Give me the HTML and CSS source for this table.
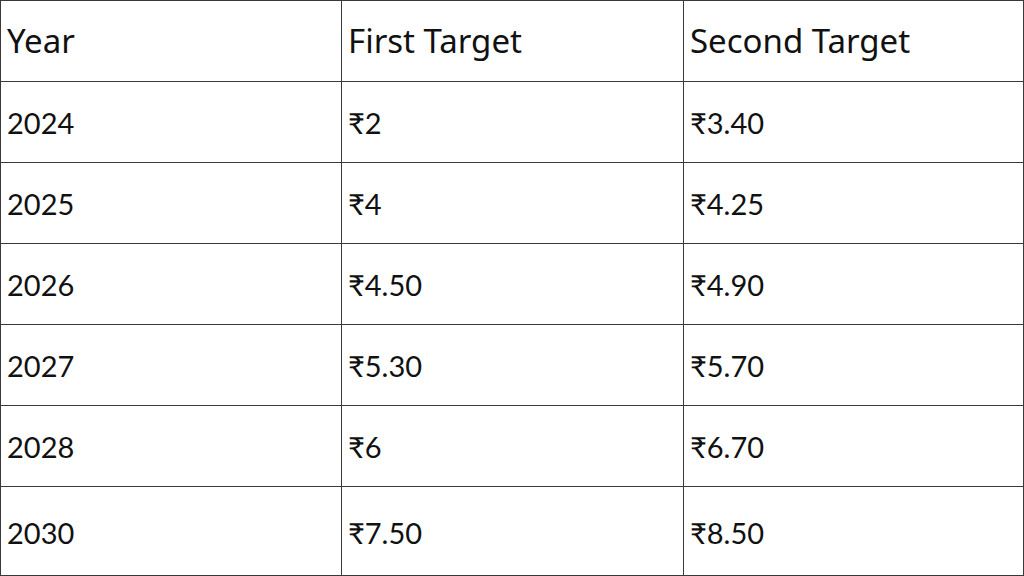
FILE: index.html
```html
<!DOCTYPE html>
<html>
<head>
<meta charset="utf-8">
<link rel="stylesheet" href="styles.css">
</head>
<body>
<table class="targets">
  <colgroup>
    <col class="col-a"><col class="col-b"><col class="col-c">
  </colgroup>
  <thead>
    <tr class="head-row">
      <th>Year</th><th>First Target</th><th>Second Target</th>
    </tr>
  </thead>
  <tbody>
    <tr><td>2024</td><td>₹2</td><td>₹3.40</td></tr>
    <tr><td>2025</td><td>₹4</td><td>₹4.25</td></tr>
    <tr><td>2026</td><td>₹4.50</td><td>₹4.90</td></tr>
    <tr><td>2027</td><td>₹5.30</td><td>₹5.70</td></tr>
    <tr><td>2028</td><td>₹6</td><td>₹6.70</td></tr>
    <tr class="last-row"><td>2030</td><td>₹7.50</td><td>₹8.50</td></tr>
  </tbody>
</table>
</body>
</html>
```
FILE: styles.css
```css
html, body {
  margin: 0;
  padding: 0;
  background: #ffffff;
}
.targets {
  border-collapse: collapse;
  width: 1023px;
  table-layout: fixed;
  color: #111111;
}
.col-a { width: 341px; }
.col-b { width: 342px; }
.col-c { width: 340px; }
.targets th,
.targets td {
  border: 1px solid #3a3a3a;
  text-align: left;
  vertical-align: middle;
  padding: 0 0 0 6px;
  height: 81px;
  box-sizing: border-box;
}
.targets th {
  font-family: "Noto Sans", sans-serif;
  font-weight: 400;
  font-size: 33px;
  line-height: 1;
  padding-bottom: 2px;
}
.targets td {
  font-family: "Lato", "Noto Sans", sans-serif;
  font-size: 29px;
  line-height: 1;
  padding-top: 0;
}
.last-row td {
  height: 89px;
  padding-top: 2px;
}
```
